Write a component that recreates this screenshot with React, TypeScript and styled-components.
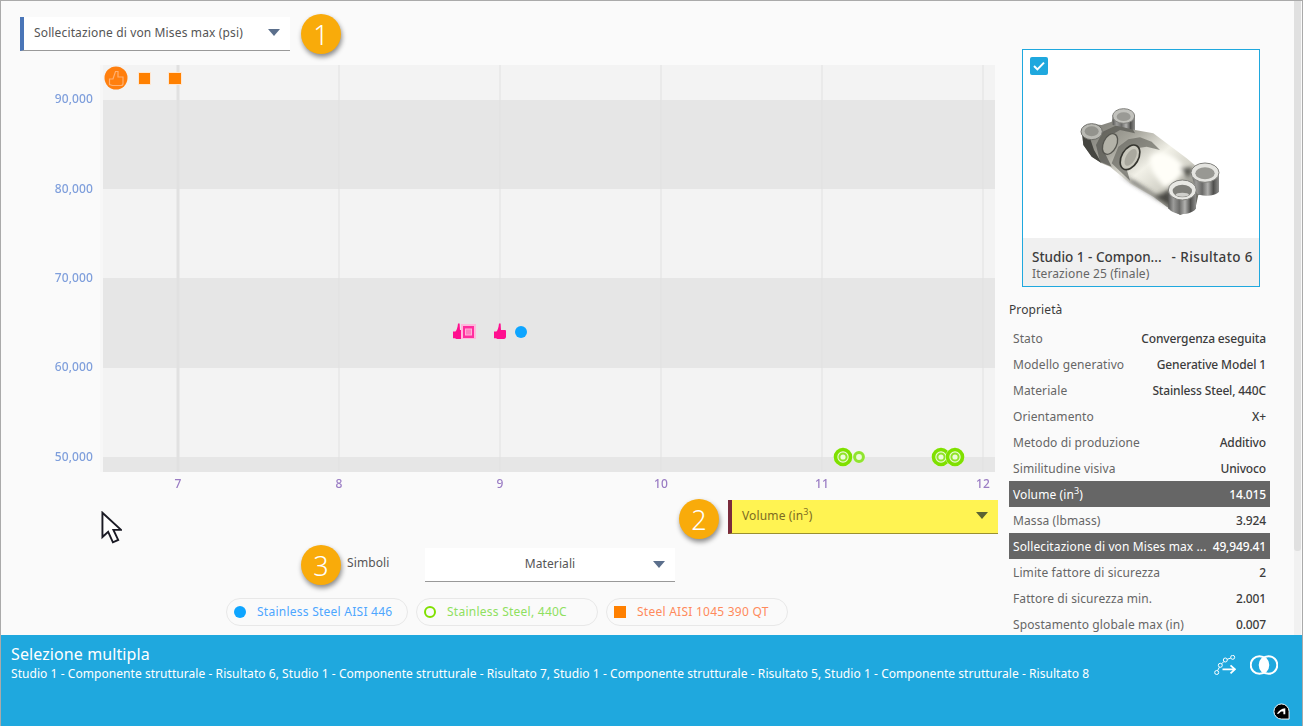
import styled, { createGlobalStyle } from "styled-components";

const GlobalStyle = createGlobalStyle`
  html, body {
    margin: 0;
    padding: 0;
    background: #fafafa;
    font-family: "Noto Sans", "Liberation Sans", sans-serif;
    letter-spacing: 0.1px;
    overflow: hidden;
  }
  * {
    box-sizing: border-box;
  }
`;

const PROPERTIES = [
  { label: "Stato", value: "Convergenza eseguita" },
  { label: "Modello generativo", value: "Generative Model 1" },
  { label: "Materiale", value: "Stainless Steel, 440C" },
  { label: "Orientamento", value: "X+" },
  { label: "Metodo di produzione", value: "Additivo" },
  { label: "Similitudine visiva", value: "Univoco" },
  { label: <>Volume (in<sup>3</sup>)</>, value: "14.015", active: true },
  { label: "Massa (lbmass)", value: "3.924" },
  { label: "Sollecitazione di von Mises max ...", value: "49,949.41", active: true },
  { label: "Limite fattore di sicurezza", value: "2" },
  { label: "Fattore di sicurezza min.", value: "2.001" },
  { label: "Spostamento globale max (in)", value: "0.007" },
];

const LEGEND = [
  { label: "Stainless Steel AISI 446", color: "#4da6ff", kind: "dot" },
  { label: "Stainless Steel, 440C", color: "#8fe060", kind: "ring" },
  { label: "Steel AISI 1045 390 QT", color: "#ff8a5c", kind: "square" },
] as const;

const BANDS = [
  { y: 65, h: 35, dark: false },
  { y: 100, h: 89, dark: true },
  { y: 189, h: 89, dark: false },
  { y: 278, h: 90, dark: true },
  { y: 368, h: 89, dark: false },
  { y: 457, h: 15, dark: true },
];

const Y_TICKS = [
  { y: 103, label: "90,000" },
  { y: 193, label: "80,000" },
  { y: 282, label: "70,000" },
  { y: 371, label: "60,000" },
  { y: 461, label: "50,000" },
];

const X_TICKS = [
  { x: 178, label: "7" },
  { x: 339, label: "8" },
  { x: 500, label: "9" },
  { x: 661, label: "10" },
  { x: 822, label: "11" },
  { x: 983, label: "12" },
];

const Thumb = ({ x, y, color }: { x: number; y: number; color: string }) => (
  <path
    transform={`translate(${x - 6} ${y - 8})`}
    fill={color}
    d="M5 -1.5h1.6l.4 6.5h3.8c.8 0 1.2.6 1.2 1.2v5.6c0 1-.8 2.2-2 2.2H4c-1 0-1.4-.4-2-.8H0V6.4h2.4C3.6 5.6 4.6 3 5 -1.5z"
  />
);

const GreenRing = ({ x, big }: { x: number; big?: boolean }) =>
  big ? (
    <g fill="none">
      <circle cx={x} cy={457} r={9.5} fill="#ecfbd8" stroke="none" />
      <circle cx={x} cy={457} r={7.5} stroke="#7fe000" strokeWidth={3.6} />
      <circle cx={x} cy={457} r={3.6} stroke="#8fe428" strokeWidth={2} />
    </g>
  ) : (
    <g fill="none">
      <circle cx={x} cy={457} r={6.2} fill="#ecfbd8" stroke="none" />
      <circle cx={x} cy={457} r={4.4} stroke="#90e430" strokeWidth={3} />
    </g>
  );

const Chart = () => (
  <ChartSvg viewBox="0 65 998 430">
    <rect x={100} y={65} width={895} height={407} fill="#f7f7f7" />
    {BANDS.map((b) => (
      <rect
        key={b.y}
        x={103}
        y={b.y}
        width={892}
        height={b.h}
        fill={b.dark ? "#e6e6e6" : "#f3f3f3"}
      />
    ))}
    {X_TICKS.map((t, i) => (
      <line
        key={t.x}
        x1={t.x}
        x2={t.x}
        y1={65}
        y2={472}
        stroke="#e1e1e1"
        strokeWidth={i === 0 ? 3 : 1}
      />
    ))}
    {Y_TICKS.map((t) => (
      <AxisLabel key={t.y} x={93} y={t.y} textAnchor="end" fill="#7f9fdc">
        {t.label}
      </AxisLabel>
    ))}
    {X_TICKS.map((t) => (
      <AxisLabel key={t.x} x={t.x} y={488} textAnchor="middle" fill="#9a7cc4">
        {t.label}
      </AxisLabel>
    ))}

    <circle cx={116} cy={78} r={11.5} fill="#ff7f0e" />
    <path
      d="M109.5 79h3.5l2.5-7.5h2.5v5.5h5v6.5c0 1-1 2-2 2h-8.5l-3-1z"
      fill="none"
      stroke="#ffb070"
      strokeWidth={1.2}
    />
    <rect x={138} y={72} width={13} height={13} fill="#ffe6d0" />
    <rect x={139} y={73} width={11} height={11} fill="#ff8000" />
    <rect x={168} y={72} width={14} height={13} fill="#ffe6d0" />
    <rect x={169} y={73} width={12} height={11} fill="#ff8000" />

    <Thumb x={459} y={333} color="#ff0f8f" />
    <rect x={461} y={324} width={15} height={15} fill="#ffb8dc" />
    <rect x={463} y={326} width={11} height={12} fill="#ff2e9e" />
    <rect x={465.5} y={329} width={6} height={6} fill="#ff7fc0" stroke="#ffb0d8" />
    <Thumb x={500} y={333} color="#ff0f8f" />
    <circle cx={521} cy={332} r={6} fill="#0ea5ff" />

    <GreenRing x={843} big />
    <GreenRing x={859} />
    <GreenRing x={941} big />
    <GreenRing x={955} big />
  </ChartSvg>
);

const CaretIcon = ({ color }: { color: string }) => (
  <svg width="12" height="7" viewBox="0 0 12 7">
    <path d="M0 0h12L6 7z" fill={color} />
  </svg>
);

const PartPicture = () => (
  <PartSvg viewBox="9 0 708 564">
    <defs>
      <linearGradient id="steel" x1="0" y1="0" x2="1" y2="0.9">
        <stop offset="0" stopColor="#6e6e69" />
        <stop offset="0.3" stopColor="#a3a299" />
        <stop offset="0.52" stopColor="#f2f1e8" />
        <stop offset="0.68" stopColor="#d5d4ca" />
        <stop offset="0.85" stopColor="#7b7b74" />
        <stop offset="1" stopColor="#4a4a46" />
      </linearGradient>
      <linearGradient id="tube" x1="0" y1="0" x2="1" y2="0">
        <stop offset="0" stopColor="#595957" />
        <stop offset="0.18" stopColor="#9c9c9a" />
        <stop offset="0.4" stopColor="#6b6b69" />
        <stop offset="0.6" stopColor="#b1b1af" />
        <stop offset="0.8" stopColor="#4f4f4d" />
        <stop offset="1" stopColor="#8f8f8d" />
      </linearGradient>
      <filter id="soft" x="-20%" y="-20%" width="140%" height="140%">
        <feGaussianBlur stdDeviation="6" />
      </filter>
      <filter id="softer" x="-20%" y="-20%" width="140%" height="140%">
        <feGaussianBlur stdDeviation="2" />
      </filter>
    </defs>
    <g filter="url(#softer)">
      <path
        fill="url(#steel)"
        d="M185 240 L215 222 L245 225 L275 215 L280 195 L345 195 L345 240 L400 250 L440 280 L500 325 L530 350 L590 350 L590 425 L535 435 L525 480 L480 495 L440 470 L400 440 L330 400 L270 350 L245 340 L215 320 L190 285 Z"
      />
      <path fill="#44443f" d="M186 245 L205 250 L222 300 L245 340 L215 320 L190 285 Z" />
      <path fill="#5d5d57" opacity="0.8" d="M240 335 L228 285 L248 245 L290 226 L335 232 L345 250 L300 240 L262 262 L250 300 L275 350 Z" />
      <path fill="#6a6a62" opacity="0.7" d="M275 340 L295 290 L325 268 L360 262 L395 275 L420 300 L380 290 L340 296 L312 330 L330 392 Z" />
    </g>
    <g filter="url(#soft)">
      <path fill="#fffef8" d="M392 320 C425 290 465 320 495 352 C480 385 450 410 432 410 C415 385 385 365 392 320 Z" />
      <path fill="#3a3a37" d="M300 372 L345 395 L420 445 L445 462 L400 438 L335 398 Z" />
      <path fill="#4a4a45" d="M400 440 C430 430 445 425 450 410 L455 470 Z" />
      <path fill="#55554f" d="M480 352 L520 355 L505 385 Z" />
    </g>

    <ellipse cx={215} cy={245} rx={32} ry={24} fill="#b9b9b3" stroke="#6f6f6a" strokeWidth={3} />
    <ellipse cx={215} cy={244} rx={21} ry={15} fill="#93938d" />
    <path fill="url(#tube)" d="M278 195 H345 V240 L310 232 L278 225 Z" />
    <ellipse cx={311} cy={198} rx={33} ry={22} fill="#c2c2bd" stroke="#80807c" strokeWidth={3} />
    <ellipse cx={311} cy={200} rx={21} ry={13} fill="#9a9a95" />

    <ellipse cx={270} cy={282} rx={20} ry={33} transform="rotate(25 270 282)" fill="#b3b2a8" stroke="#55554f" strokeWidth={4} />
    <ellipse cx={330} cy={322} rx={25} ry={40} transform="rotate(30 330 322)" fill="#c9c8bd" stroke="#35352f" strokeWidth={5} />
    <ellipse cx={332} cy={322} rx={14} ry={28} transform="rotate(30 332 322)" fill="#aaa99f" />

    <path fill="url(#tube)" d="M513 368 H597 V425 C585 440 540 440 530 430 Z" />
    <ellipse cx={555} cy={368} rx={42} ry={29} fill="#e4e4e0" stroke="#80807c" strokeWidth={3} />
    <ellipse cx={555} cy={370} rx={29} ry={18} fill="#989893" />
    <path fill="url(#tube)" d="M445 420 H528 V475 C515 498 460 498 445 475 Z" />
    <ellipse cx={487} cy={420} rx={42} ry={30} fill="#e8e8e4" stroke="#80807c" strokeWidth={3} />
    <ellipse cx={487} cy={423} rx={29} ry={19} fill="#7f7f7a" />
    <ellipse cx={487} cy={434} rx={20} ry={6} fill="#cfcfcb" />
  </PartSvg>
);

export default function App() {
  return (
    <Page>
      <GlobalStyle />
      <Main>
        <LeftPane>
          <TopRow>
            <Select $width={270} $accent="#4a76b8">
              <span>Sollecitazione di von Mises max (psi)</span>
              <CaretIcon color="#5b6f8c" />
            </Select>
            <Badge>1</Badge>
          </TopRow>
          <Chart />
          <AxisRow>
            <Badge $drop>2</Badge>
            <Select $width={270} $accent="#7a2b3c" $bg="#fff352" $line="#9a9030" $text="#7d6b22">
              <span>
                Volume (in<sup>3</sup>)
              </span>
              <CaretIcon color="#5b6332" />
            </Select>
          </AxisRow>
          <SymbolsRow>
            <Badge>3</Badge>
            <SymbolsLabel>Simboli</SymbolsLabel>
            <CenteredSelect>
              <span>Materiali</span>
              <CaretIcon color="#5b6f8c" />
            </CenteredSelect>
          </SymbolsRow>
          <LegendRow>
            {LEGEND.map((item) => (
              <Chip key={item.label} $color={item.color}>
                <Swatch $kind={item.kind} />
                <span>{item.label}</span>
              </Chip>
            ))}
          </LegendRow>
        </LeftPane>

        <RightPane>
          <Card>
            <CheckBox>
              <svg width="12" height="10" viewBox="0 0 12 10">
                <path d="M1 5l3.4 3.4L11 1.6" fill="none" stroke="#fff" strokeWidth="2" />
              </svg>
            </CheckBox>
            <PartPicture />
            <Caption>
              <CaptionTitle>
                <span>Studio 1 - Compon...</span>
                <CaptionSuffix>- Risultato 6</CaptionSuffix>
              </CaptionTitle>
              <CaptionSub>Iterazione 25 (finale)</CaptionSub>
            </Caption>
          </Card>
          <PropsHeading>Proprietà</PropsHeading>
          {PROPERTIES.map((p) => (
            <PropRow key={p.value} $active={p.active}>
              <span>{p.label}</span>
              <PropValue $active={p.active}>{p.value}</PropValue>
            </PropRow>
          ))}
        </RightPane>

        <ScrollRail>
          <ScrollThumb />
        </ScrollRail>
      </Main>

      <Footer>
        <FooterText>
          <FooterTitle>Selezione multipla</FooterTitle>
          <FooterSub>
            Studio 1 - Componente strutturale - Risultato 6, Studio 1 - Componente strutturale -
            Risultato 7, Studio 1 - Componente strutturale - Risultato 5, Studio 1 - Componente
            strutturale - Risultato 8
          </FooterSub>
        </FooterText>
        <FooterIcons>
          <svg width="22" height="20" viewBox="0 0 22 20" fill="none" stroke="#fff">
            <circle cx="2.7" cy="17.5" r="2" />
            <circle cx="6.3" cy="10.3" r="2" />
            <circle cx="11.3" cy="5" r="2" />
            <circle cx="18.7" cy="2.3" r="2" />
            <path d="M3.6 15.6l1.8-3.4M7.7 8.8l2.2-2.3M13.2 4.3l3.6-1.3" />
            <path d="M8.5 14.3H21M16.5 10.3l4.5 4-4.5 4" strokeWidth="1.8" />
          </svg>
          <svg width="28" height="20" viewBox="0 0 28 20">
            <path d="M14 2.2a9 9 0 0 1 0 15.6 9 9 0 0 1 0-15.6z" fill="#fff" />
            <circle cx="9.5" cy="10" r="8.8" fill="none" stroke="#fff" strokeWidth="2" />
            <circle cx="18.5" cy="10" r="8.8" fill="none" stroke="#fff" strokeWidth="2" />
          </svg>
        </FooterIcons>
        <Logo viewBox="0 0 18 18">
          <path d="M9 1a8 8 0 0 0-8 8 8 8 0 0 0 8 8h8V9a8 8 0 0 0-8-8z" fill="#000" stroke="#fff" strokeWidth="1" />
          <path d="M4 11.5C6 8 9 6 13 5.5v6.5h-2V9H8.5l-2.5 2.5z" fill="#fff" />
        </Logo>
      </Footer>

      <Cursor viewBox="0 0 22 34">
        <path
          d="M1.5 1.5V27l6-5.5 5 11 5.5-2.5-5-10.5h8z"
          fill="#fff"
          stroke="#1a1a24"
          strokeWidth="2"
        />
      </Cursor>
    </Page>
  );
}

const Page = styled.div`
  position: relative;
  display: flex;
  flex-direction: column;
  width: 1303px;
  height: 726px;
  background: #fafafa;
  border: 1px solid #aaaaaa;
  border-bottom: none;
  overflow: hidden;
`;

const Main = styled.div`
  display: flex;
  height: 634px;
  flex: none;
  overflow: hidden;
`;

const LeftPane = styled.div`
  display: flex;
  flex-direction: column;
  width: 1008px;
  flex: none;
`;

const TopRow = styled.div`
  display: flex;
  align-items: center;
  gap: 11px;
  height: 40px;
  margin-top: 13px;
  margin-bottom: 11px;
  padding-left: 19px;
`;

const ChartSvg = styled.svg`
  display: block;
  width: 998px;
  height: 430px;
  margin-left: -1px;
  flex: none;
`;

const AxisLabel = styled.text`
  font-family: "Noto Sans", sans-serif;
  font-size: 12px;
  font-weight: 500;
  filter: blur(0.4px);
`;

const AxisRow = styled.div`
  display: flex;
  justify-content: flex-end;
  align-items: center;
  gap: 9px;
  height: 40px;
  margin-top: 2px;
  padding-right: 11px;
`;

const SymbolsRow = styled.div`
  display: flex;
  align-items: center;
  height: 40px;
  margin-top: 8px;
  padding-left: 300px;
`;

const SymbolsLabel = styled.span`
  width: 78px;
  margin-left: 6px;
  padding-bottom: 5px;
  font-size: 12px;
  color: #555555;
`;

const LegendRow = styled.div`
  display: flex;
  gap: 8px;
  margin-top: 13px;
  padding-left: 225px;
`;

const Select = styled.div<{
  $width: number;
  $accent: string;
  $bg?: string;
  $line?: string;
  $text?: string;
}>`
  display: flex;
  align-items: center;
  justify-content: space-between;
  width: ${(p) => p.$width}px;
  height: 34px;
  padding: 0 10px 3px 10px;
  background: ${(p) => p.$bg ?? "#ffffff"};
  border-left: 4px solid ${(p) => p.$accent};
  border-bottom: 1px solid ${(p) => p.$line ?? "#999999"};
  font-size: 12px;
  letter-spacing: 0.14px;
  color: ${(p) => p.$text ?? "#555555"};

  sup {
    font-size: 9px;
    line-height: 0;
  }
`;

const CenteredSelect = styled.div`
  position: relative;
  display: flex;
  align-items: center;
  justify-content: center;
  width: 250px;
  height: 34px;
  padding-bottom: 3px;
  background: #ffffff;
  border-bottom: 1px solid #999999;
  font-size: 12px;
  color: #555555;

  svg {
    position: absolute;
    right: 10px;
    top: 13px;
  }
`;

const Badge = styled.div<{ $drop?: boolean }>`
  display: flex;
  align-items: center;
  justify-content: center;
  width: 40px;
  height: 40px;
  margin-top: ${(p) => (p.$drop ? "4px" : "0")};
  flex: none;
  border-radius: 50%;
  background: #f9ab0a;
  box-shadow: 1px 3px 5px rgba(0, 0, 0, 0.45);
  font-size: 27px;
  font-weight: 300;
  color: #ffffff;
`;

const Chip = styled.div<{ $color: string }>`
  display: flex;
  align-items: center;
  gap: 11px;
  width: 182px;
  height: 28px;
  padding-left: 7px;
  border: 1px solid #e8e8e8;
  border-radius: 14px;
  font-size: 12px;
  letter-spacing: 0.25px;
  color: ${(p) => p.$color};
  white-space: nowrap;

  span:last-child {
    padding-bottom: 2px;
  }
`;

const Swatch = styled.span<{ $kind: "dot" | "ring" | "square" }>`
  width: 12px;
  height: 12px;
  flex: none;
  border-radius: ${(p) => (p.$kind === "square" ? "0" : "50%")};
  background: ${(p) =>
    p.$kind === "dot" ? "#0ea5ff" : p.$kind === "square" ? "#ff8000" : "transparent"};
  border: ${(p) => (p.$kind === "ring" ? "2.5px solid #7fe000" : "none")};
`;

const RightPane = styled.div`
  width: 261px;
  flex: none;
`;

const Card = styled.div`
  position: relative;
  width: 238px;
  height: 238px;
  margin: 48px 0 0 13px;
  background: #ffffff;
  border: 1px solid #1fa8de;
`;

const CheckBox = styled.div`
  position: absolute;
  top: 7px;
  left: 7px;
  display: flex;
  align-items: center;
  justify-content: center;
  width: 18px;
  height: 18px;
  border-radius: 2px;
  background: #1fa8de;
`;

const PartSvg = styled.svg`
  display: block;
  width: 236px;
  height: 188px;
`;

const Caption = styled.div`
  height: 48px;
  padding: 10px 6px 0 9px;
  background: #f0f0f0;
`;

const CaptionTitle = styled.div`
  display: flex;
  justify-content: space-between;
  font-size: 13.5px;
  font-weight: 500;
  line-height: 18px;
  letter-spacing: 0;
  color: #3c3c3c;
  white-space: nowrap;
`;

const CaptionSuffix = styled.span`
  letter-spacing: 0.4px;
`;

const CaptionSub = styled.div`
  font-size: 12px;
  line-height: 16px;
  color: #666666;
`;

const PropsHeading = styled.div`
  height: 38px;
  padding-top: 15px;
  font-size: 12px;
  line-height: 16px;
  color: #3c3c3c;
`;

const PropRow = styled.div<{ $active?: boolean }>`
  display: flex;
  align-items: center;
  justify-content: space-between;
  height: 26px;
  padding: 0 4px;
  background: ${(p) => (p.$active ? "#666666" : "transparent")};
  color: ${(p) => (p.$active ? "#ffffff" : "#666666")};
  font-size: 12px;
  white-space: nowrap;

  sup {
    font-size: 9px;
    line-height: 0;
  }
`;

const PropValue = styled.span<{ $active?: boolean }>`
  font-weight: 500;
  letter-spacing: -0.14px;
  color: ${(p) => (p.$active ? "#ffffff" : "#3c3c3c")};
`;

const ScrollRail = styled.div`
  width: 7px;
  height: 100%;
  margin-left: 24px;
  flex: none;
  background: #f1f1f1;
`;

const ScrollThumb = styled.div`
  width: 100%;
  height: 550px;
  background: #e0e0e0;
  border-radius: 0 0 3px 3px;
`;

const Footer = styled.footer`
  position: relative;
  display: flex;
  justify-content: space-between;
  flex: 1;
  margin: 0 -1px;
  padding: 9px 25px 0 11px;
  background: #1fa8de;
  color: #ffffff;
`;

const FooterText = styled.div`
  display: flex;
  flex-direction: column;
  gap: 1px;
`;

const FooterTitle = styled.div`
  font-size: 16px;
  line-height: 20px;
`;

const FooterSub = styled.div`
  font-size: 12px;
  line-height: 18px;
  letter-spacing: 0.055px;
`;

const FooterIcons = styled.div`
  display: flex;
  gap: 14px;
  align-items: flex-start;
  padding-top: 11px;
`;

const Logo = styled.svg`
  position: absolute;
  right: 13px;
  bottom: 6px;
  width: 17px;
  height: 17px;
`;

const Cursor = styled.svg`
  position: absolute;
  left: 100px;
  top: 510px;
  width: 21px;
  height: 33px;
`;
